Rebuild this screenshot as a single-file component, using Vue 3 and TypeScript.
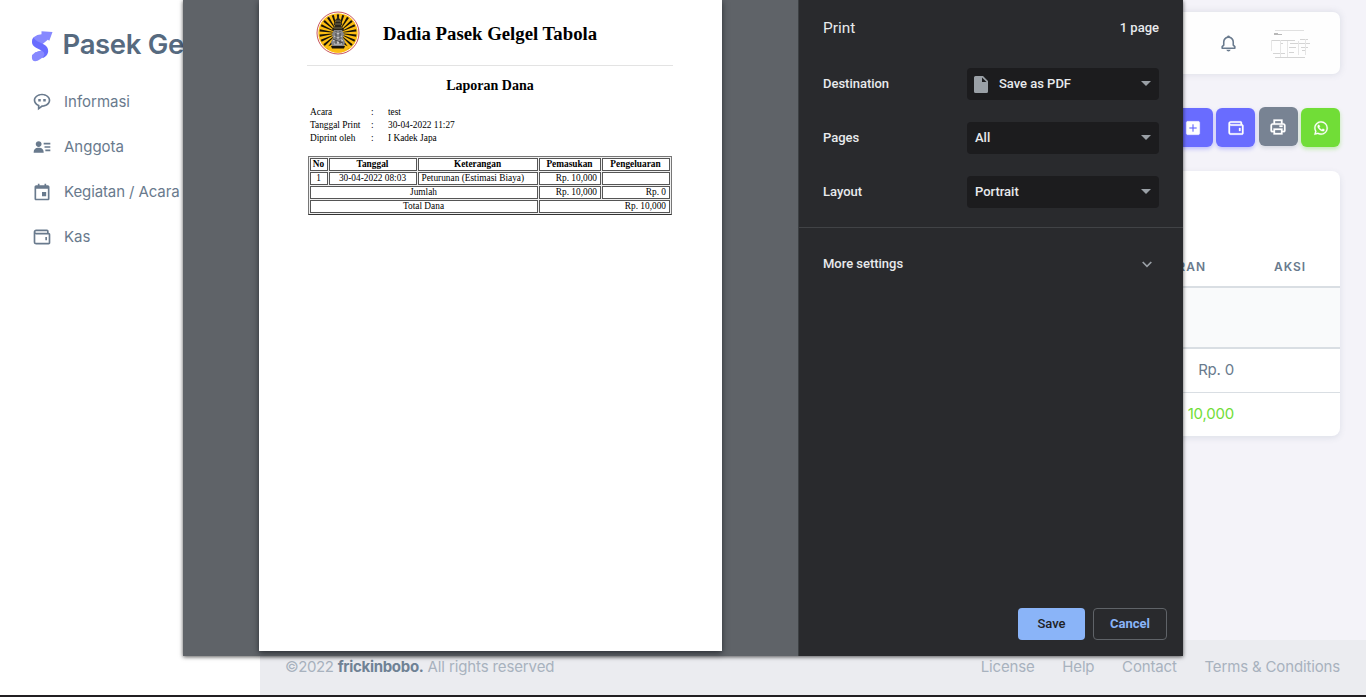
<script setup lang="ts">
interface MenuItem { label: string; icon: string; cls: string }

const icons: Record<string, string> = {
  user: 'M15 11h7v2h-7zm1 4h6v2h-6zm-2-8h8v2h-8zM4 19h10v-1c0-2.757-2.243-5-5-5H7c-2.757 0-5 2.243-5 5v1h2zm4-7c1.995 0 3.5-1.505 3.5-3.5S9.995 5 8 5 4.500 6.505 4.500 8.500 6.005 12 8 12z',
  chat: 'M7.500 8.500h3v3h-3zM13.500 8.500h3v3h-3zM12 2C6.486 2 2 5.589 2 10c0 2.908 1.898 5.515 5 6.934V22l5.340-4.004C17.697 17.852 22 14.320 22 10c0-4.411-4.486-8-10-8zm0 14h-.333L9 18v-2.417l-.641-.247C5.671 14.301 4 12.256 4 10c0-3.309 3.589-6 8-6s8 2.691 8 6-3.589 6-8 6z',
  calendar: 'M19 4h-2V2h-2v2H9V2H7v2H5c-1.103 0-2 .897-2 2v14c0 1.103.897 2 2 2h14c1.103 0 2-.897 2-2V6c0-1.103-.897-2-2-2zM5 20V8h14v12zM12 12h5v5h-5z',
  wallet: 'M16 12h2v4h-2zM20 7V5c0-1.103-.897-2-2-2H5C3.346 3 2 4.346 2 6v12c0 2.201 1.794 3 3 3h15c1.103 0 2-.897 2-2V9c0-1.103-.897-2-2-2zM5 5h13v2H5a1.001 1.001 0 0 1 0-2zm15 14H5.012C4.550 18.988 4 18.805 4 18V8.815c.314.113.647.185 1 .185h15v10z',
  bell: 'M19 13.586V10c0-3.217-2.185-5.927-5.145-6.742C13.562 2.520 12.846 2 12 2s-1.562.520-1.855 1.258C7.185 4.074 5 6.783 5 10v3.586l-1.707 1.707A.996.996 0 0 0 3 16v2a1 1 0 0 0 1 1h16a1 1 0 0 0 1-1v-2a.996.996 0 0 0-.293-.707L19 13.586zM19 17H5v-.586l1.707-1.707A.996.996 0 0 0 7 14v-4c0-2.757 2.243-5 5-5s5 2.243 5 5v4c0 .266.105.520.293.707L19 16.414V17zm-7 5a2.980 2.980 0 0 0 2.818-2H9.182A2.980 2.980 0 0 0 12 22z',
  plus: 'M21 5c0-1.103-.897-2-2-2H5c-1.103 0-2 .897-2 2v14c0 1.103.897 2 2 2h14c1.103 0 2-.897 2-2V5zm-4 8h-4v4h-2v-4H7v-2h4V7h2v4h4v2z',
  printer: 'M19 7h-1V2H6v5H5c-1.654 0-3 1.346-3 3v7c0 1.103.897 2 2 2h2v3h12v-3h2c1.103 0 2-.897 2-2v-7c0-1.654-1.346-3-3-3zM8 4h8v3H8V4zm8 16H8v-4h8v4zm4-3h-2v-3H6v3H4v-7c0-.551.449-1 1-1h14c.552 0 1 .449 1 1v7zM14 10h4v2h-4z',
  whatsapp: 'M18.403 5.633A8.919 8.919 0 0 0 12.053 3c-4.948 0-8.976 4.027-8.978 8.977 0 1.582.413 3.126 1.198 4.488L3 21.116l4.759-1.249a8.981 8.981 0 0 0 4.290 1.093h.004c4.947 0 8.975-4.027 8.977-8.977a8.926 8.926 0 0 0-2.627-6.350m-6.350 13.812h-.003a7.446 7.446 0 0 1-3.798-1.041l-.272-.162-2.824.741.753-2.753-.177-.282a7.448 7.448 0 0 1-1.141-3.971c.002-4.114 3.349-7.461 7.465-7.461a7.413 7.413 0 0 1 5.275 2.188 7.420 7.420 0 0 1 2.183 5.279c-.002 4.114-3.349 7.462-7.461 7.462m4.093-5.589c-.225-.113-1.327-.655-1.533-.730-.205-.075-.354-.112-.504.112s-.580.729-.711.879-.262.168-.486.056-.947-.349-1.804-1.113c-.667-.595-1.117-1.329-1.248-1.554s-.014-.346.099-.458c.101-.1.224-.262.336-.393.112-.131.149-.224.224-.374s.038-.281-.019-.393c-.056-.113-.505-1.217-.692-1.666-.181-.435-.366-.377-.504-.383a9.650 9.650 0 0 0-.429-.008.826.826 0 0 0-.599.280c-.206.225-.785.767-.785 1.871s.804 2.171.916 2.321c.112.150 1.582 2.415 3.832 3.387.536.231.954.369 1.279.473.537.171 1.026.146 1.413.089.431-.064 1.327-.542 1.514-1.066.187-.524.187-.973.131-1.067-.056-.094-.207-.151-.430-.263',
}

const menu: MenuItem[] = [
  { label: 'Informasi', icon: 'chat', cls: 'm-info' },
  { label: 'Anggota', icon: 'user', cls: 'm-ang' },
  { label: 'Kegiatan / Acara', icon: 'calendar', cls: 'm-keg' },
  { label: 'Kas', icon: 'wallet', cls: 'm-kas' },
]

const actions = [
  { icon: 'plus', cls: 'primary' },
  { icon: 'wallet', cls: 'primary' },
  { icon: 'printer', cls: 'grey' },
  { icon: 'whatsapp', cls: 'green' },
]

const settings = [
  { label: 'Destination', value: 'Save as PDF', file: true },
  { label: 'Pages', value: 'All', file: false },
  { label: 'Layout', value: 'Portrait', file: false },
]

const meta = [
  ['Acara', 'test'],
  ['Tanggal Print', '30-04-2022 11:27'],
  ['Diprint oleh', 'I Kadek Japa'],
]

// Wedges radiating from the emblem's centre
const rays: string[] = Array.from({ length: 22 }, (_, i) => {
  const a = ((i + 0.5) * 2 * Math.PI) / 22
  const d = 0.062
  const p = (t: number) => `${(22 + 18.5 * Math.cos(t)).toFixed(2)} ${(22 + 18.5 * Math.sin(t)).toFixed(2)}`
  return `M22 22L${p(a - d)}L${p(a + d)}Z`
})
</script>

<template>
  <div class="screen">
    <div class="app">
      <aside class="sidebar">
        <div class="brand">
          <svg class="logo" width="22" height="32" viewBox="0 0 22 32">
            <path d="M10.500 1.300L21.500 2L18.300 10.800L16.800 9.800L11 14.500L1.500 12Q.500 9 3 7Q6 4.500 10.500 4.200Z" fill="#8789ff" />
            <path d="M2.500 7.500Q4 10.500 9 12.500L13 14.500Q18 17.500 17 22.500Q16 26 12 28L4 22.500L10.500 20.500L5 17.800Q-1.500 14 2.500 7.500Z" fill="#696cff" />
            <path d="M4 22.500L10.500 20.500Q13.500 22 13.500 24.500Q13 27.200 9.500 29Q4 33 1.500 30Q-.5 25 4 22.500Z" fill="#8789ff" />
          </svg>
          <span class="brand-name">Pasek Gelgel</span>
        </div>
        <nav class="menu">
          <a v-for="m in menu" :key="m.label" class="menu-item">
            <svg width="20" height="20" viewBox="0 0 24 24"><path :d="icons[m.icon]" fill="currentColor" fill-rule="evenodd" /></svg>
            <span :class="m.cls">{{ m.label }}</span>
          </a>
        </nav>
      </aside>
      <main class="main">
        <header class="navbar">
          <svg class="bell" width="19" height="19" viewBox="0 0 24 24"><path :d="icons.bell" fill="currentColor" fill-rule="evenodd" /></svg>
          <svg class="avatar" width="40" height="40" viewBox="0 0 40 40">
            <g fill="none" stroke="#e0e0e0" stroke-width="1">
              <path d="M5 7.500H34" />
              <path d="M4 11.500H12M4 10.500H8" stroke="#b8b8b8" />
              <path d="M1 17.500H25M20 20.500H40M30 16.500H38M19 24.500H26M31 24.500H38M19 29.500H24M32 27.500H36M3 30.500H15M5 34.500H35M10 20.500H13" stroke="#d4d4d4" />
              <path d="M1.500 17V28M10.500 17V34M17.500 18V34M28.500 18V32M35.500 16V32" stroke="#e6e6e6" />
            </g>
          </svg>
        </header>
        <div class="actions">
          <button v-for="(a, i) in actions" :key="i" class="action" :class="a.cls">
            <svg width="18" height="18" viewBox="0 0 24 24"><path :d="icons[a.icon]" fill="currentColor" stroke="currentColor" stroke-width=".4" fill-rule="evenodd" /></svg>
          </button>
        </div>
        <section class="card">
          <div class="row head"><span class="c1">PENGELUARAN</span><span class="c2">AKSI</span></div>
          <div class="row blank"></div>
          <div class="row sum"><span class="c1">Rp. 0</span></div>
          <div class="row total"><span class="c1">Rp. 10,000</span></div>
        </section>
        <footer class="footer">
          <div class="copy"><span class="f-year">©2022</span><b>frickinbobo.</b><span class="f-rights">All rights reserved</span></div>
          <div class="links"><span>License</span><span>Help</span><span>Contact</span><span>Terms &amp; Conditions</span></div>
        </footer>
      </main>
    </div>
    <div class="taskbar"></div>

    <div class="dialog">
      <div class="preview">
        <article class="paper">
          <div class="doc-head">
            <svg class="emblem" width="44" height="44" viewBox="0 0 44 44">
              <circle cx="22" cy="22" r="21" fill="#fff" stroke="#c9575c" stroke-width="1" />
              <circle cx="22" cy="22" r="19.700" fill="#fcbd12" />
              <path v-for="(r, i) in rays" :key="i" :d="r" fill="#17130a" />
              <path d="M10 36Q22 30 34 36Q29 41.500 22 41.700Q15 41.500 10 36Z" fill="#fcbd12" />
              <path d="M22 3L23.500 8L25 9L24 11L26.500 13L25 15L28 18L27 20H17L16 18L19 15L17.500 13L20 11L19 9L20.500 8Z" fill="#29251b" />
              <path d="M19 13H25M18 17H26M20 10H24" stroke="#8f865f" stroke-width=".8" />
              <path d="M18 19H26L28 23L27 27L29 31L28 35H16L15 31L17 27L16 23Z" fill="#858588" />
              <path d="M19 21L22 23L25 21M18 25L22 27L26 25M17 30L20 28L22 32L24 28L27 30M18 33H26" fill="none" stroke="#d2d2d2" />
              <path d="M20 20V33M24 20V33M17 28L27 32" fill="none" stroke="#353538" stroke-width=".8" />
              <path d="M15 35H29L28 37.500H16Z" fill="#17130a" />
            </svg>
            <h1>Dadia Pasek Gelgel Tabola</h1>
          </div>
          <h2>Laporan Dana</h2>
          <div class="meta">
            <template v-for="m in meta" :key="m[0]"><span>{{ m[0] }}</span><span>:</span><span>{{ m[1] }}</span></template>
          </div>
          <table class="report">
            <colgroup><col class="w1" /><col class="w2" /><col class="w3" /><col class="w4" /><col class="w5" /></colgroup>
            <tbody>
              <tr><th>No</th><th>Tanggal</th><th>Keterangan</th><th>Pemasukan</th><th>Pengeluaran</th></tr>
              <tr><td class="mid">1</td><td class="mid">30-04-2022 08:03</td><td class="left">Peturunan (Estimasi Biaya)</td><td>Rp. 10,000</td><td></td></tr>
              <tr><td colspan="3" class="mid">Jumlah</td><td>Rp. 10,000</td><td>Rp. 0</td></tr>
              <tr><td colspan="3" class="mid">Total Dana</td><td colspan="2">Rp. 10,000</td></tr>
            </tbody>
          </table>
        </article>
      </div>
      <div class="panel">
        <div class="panel-head"><span class="title">Print</span><span class="count">1 page</span></div>
        <div class="settings">
          <div v-for="s in settings" :key="s.label" class="setting">
            <span class="text">{{ s.label }}</span>
            <div class="select">
              <svg v-if="s.file" class="file" width="14" height="17" viewBox="0 0 14 17"><path d="M1.500 0H9L14 5V15.500Q14 17 12.500 17H1.500Q0 17 0 15.500V1.500Q0 0 1.500 0ZM8 1.500V6H12.500Z" fill="#9aa0a6" fill-rule="evenodd" /></svg>
              <span class="text">{{ s.value }}</span>
              <svg class="arrow" width="10" height="5" viewBox="0 0 10 5"><path d="M0 0H10L5 5Z" fill="#9aa0a6" /></svg>
            </div>
          </div>
        </div>
        <div class="more">
          <span class="text">More settings</span>
          <svg width="10" height="7" viewBox="0 0 10 7"><path d="M.7 1L5 5.300L9.300 1" fill="none" stroke="#9aa0a6" stroke-width="1.700" /></svg>
        </div>
        <div class="buttons"><button class="save">Save</button><button class="cancel">Cancel</button></div>
      </div>
    </div>
  </div>
</template>

<style>
body { margin: 0; overflow: hidden; }
</style>

<style scoped>
* { box-sizing: border-box; }
svg { display: block; flex: none; }
button { border: 0; padding: 0; font: inherit; }
.screen { position: relative; width: 1366px; height: 697px; overflow: hidden; display: flex; flex-direction: column; font-family: Inter, "Liberation Sans", sans-serif; color: #697a8d; }
.app { display: flex; height: 695px; }
.taskbar { height: 2px; background: #211f22; }
.sidebar { width: 260px; background: #fff; flex: none; }
.brand { display: flex; align-items: center; height: 34px; margin: 28px 0 0 31px; gap: 9.500px; }
.logo { margin-top: 2px; }
.brand-name { font-size: 27.500px; font-weight: 600; letter-spacing: -.350px; color: #566a7f; white-space: nowrap; padding-bottom: 2px; }
.menu { margin-top: 17px; }
.menu-item { display: flex; align-items: center; height: 45px; padding-left: 32px; gap: 12px; font-size: 15px; white-space: nowrap; }
.m-keg { letter-spacing: -.1px; }
.main { flex: 1; background: #f4f3f9; display: flex; flex-direction: column; padding-top: 12px; }
.navbar { height: 62px; margin: 0 26px; background: #fefefe; border-radius: 7px; box-shadow: 0 0 6px 1px rgba(105, 122, 141, .15); display: flex; justify-content: flex-end; align-items: center; padding-right: 30px; gap: 32px; }
.actions { display: flex; justify-content: flex-end; align-items: center; gap: 3.500px; margin: 34px 26px 0; height: 39px; }
.action { width: 39px; height: 39px; border-radius: 6px; color: #fff; display: flex; align-items: center; justify-content: center; }
.primary { background: #696cff; box-shadow: 0 2px 4px rgba(105, 108, 255, .4); }
.grey { background: #788393; box-shadow: 0 2px 4px rgba(133, 146, 163, .3); margin-top: -2px; }
.green { background: #71dd37; box-shadow: 0 2px 4px rgba(113, 221, 55, .4); }
.card { height: 265px; margin: 24px 26px 0; background: #fff; border-radius: 8px; box-shadow: 0 2px 6px rgba(67, 89, 113, .12); display: flex; flex-direction: column; overflow: hidden; }
.row { display: flex; justify-content: flex-end; align-items: center; font-size: 15px; letter-spacing: -.2px; border-bottom: 1px solid #d9dee3; }
.c1 { width: 200px; text-align: right; margin-right: 106px; }
.row.head { height: 117px; border-bottom-width: 2px; font-size: 12px; font-weight: 600; letter-spacing: 1px; padding-top: 76px; color: #697a8d; }
.head .c1 { margin-right: 68px; }
.c2 { width: 33px; margin-right: 33px; white-space: nowrap; }
.row.blank { height: 61px; background: #f9fafb; border-bottom-width: 2px; }
.row.sum { height: 44px; padding-bottom: 2px; }
.row.total { flex: 1; border: 0; color: #71dd37; padding-bottom: 2px; }
.footer { margin-top: auto; height: 55px; background: #ebecf0; padding: 0 26px 2px; display: flex; justify-content: space-between; align-items: center; color: #a8b2be; font-size: 15px; letter-spacing: -.150px; }
.copy { display: flex; gap: 4px; margin-left: -1px; }
.copy b { color: #6f8295; font-weight: 700; letter-spacing: -.3px; }
.f-year { letter-spacing: -.4px; }
.f-rights { letter-spacing: -.120px; }
.links { display: flex; gap: 27.700px; }

.dialog { position: absolute; left: 183px; top: 0; width: 1000px; height: 656px; display: flex; box-shadow: 0 1px 4px rgba(0, 0, 0, .65); }
.preview { width: 615px; background: #5f6368; padding-left: 76px; }
.paper { width: 463px; height: 651px; background: #fff; box-shadow: 0 2px 6px rgba(20, 24, 30, .7); padding: 0 49px 0 48px; font-family: "Liberation Serif", serif; color: #000; }
.doc-head { display: flex; height: 66px; border-bottom: 1px solid #e3e3e3; padding: 11px 0 0 9px; }
h1 { margin: 11px 0 0 23px; font-size: 18.750px; line-height: 24px; white-space: nowrap; }
h2 { margin: 11px 0 0; font-size: 14px; line-height: 18px; text-align: center; }
.meta { display: grid; grid-template-columns: 61px 17px 1fr; grid-auto-rows: 13px; line-height: 13px; font-size: 9.330px; margin: 11px 0 0 3px; }
.report { width: 364px; margin: 11px 0 0 1px; border: 1px solid #777; border-bottom-color: #333; border-collapse: separate; border-spacing: 1px; table-layout: fixed; font-size: 9.330px; line-height: 11px; background: #f0f0f0; }
.report th, .report td { height: 13px; padding: 0 3px; border: 1px solid #555; background: #fff; text-align: right; white-space: nowrap; }
.report th { padding: 0 1px 0 0; text-align: center; }
.report .mid { text-align: center; padding: 0 1px 0 0; }
.report .left { text-align: left; padding: 0 2.500px; }
.w1 { width: 18px; } .w2 { width: 88px; } .w3 { width: 120px; } .w4 { width: 62px; } .w5 { width: 68px; }

.panel { flex: 1; background: #292a2d; border-left: 1px solid #3c4043; color: #e8eaed; font-family: Roboto, sans-serif; font-size: 13px; font-weight: 500; display: flex; flex-direction: column; }
.panel-head { height: 56px; padding: 0 24px; display: flex; justify-content: space-between; align-items: center; }
.title { font-size: 15.400px; font-weight: 400; }
.count { padding-bottom: 2px; }
.text { padding-bottom: 2px; letter-spacing: -.020px; }
.settings { height: 172px; padding: 12px 24px 0; border-bottom: 1px solid #414346; display: flex; flex-direction: column; gap: 22px; }
.setting { height: 32px; display: flex; justify-content: space-between; align-items: center; }
.select { width: 192px; height: 32px; border-radius: 4px; background: #1c1c1e; padding: 0 8px; display: flex; align-items: center; }
.file { margin: 0 11px 0 -1px; }
.arrow { margin-left: auto; margin-bottom: 1px; }
.more { height: 72px; padding: 0 31px 0 24px; display: flex; align-items: center; justify-content: space-between; }
.buttons { margin-top: auto; display: flex; justify-content: flex-end; gap: 8px; padding: 0 16px 16px; }
.buttons button { height: 32px; border-radius: 4px; padding-bottom: 2px; }
.save { width: 67px; background: #8ab4f8; color: #202124; }
.buttons .cancel { width: 74px; background: transparent; border: 1px solid #5f6368; color: #8ab4f8; font-weight: 700; }
</style>
